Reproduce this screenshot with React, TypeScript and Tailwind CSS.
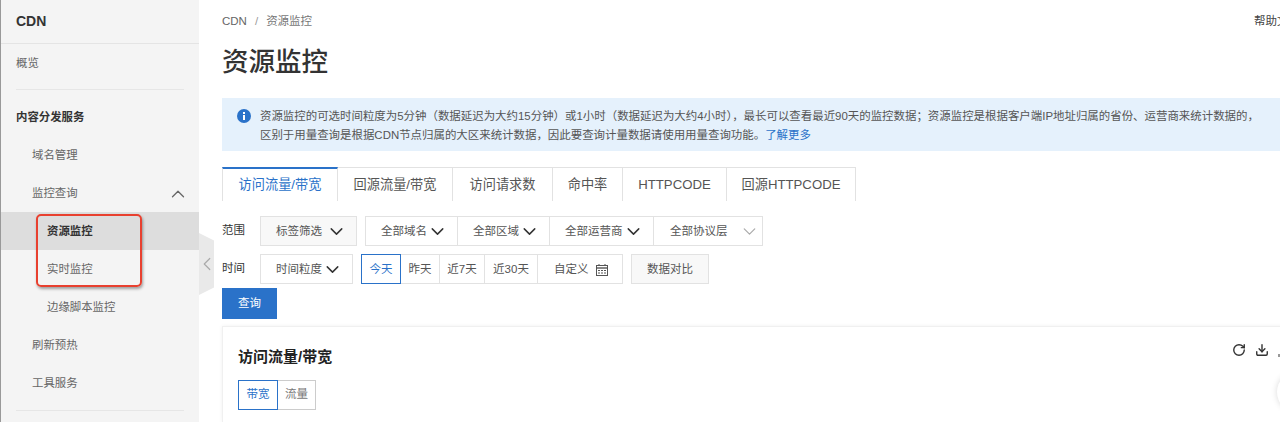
import { ChevronDown, ChevronLeft, ChevronUp, Download, RotateCw } from "lucide-react";

const font = "font-['Liberation_Sans','Noto_Sans_CJK_SC',sans-serif]";

const tabs = ["回源流量/带宽", "访问请求数", "命中率", "HTTPCODE", "回源HTTPCODE"];
const tabWidths = ["w-[115px]", "w-[100px]", "w-[70px]", "w-[104px]", "w-[129px]"];

const Sidebar = () => (
  <aside className="relative w-[199px] shrink-0 bg-[#f4f4f4] border-l border-[#999] text-[11.4px] text-[#666]">
    <div className="h-[44px] flex items-center pl-[15px] border-b border-[#e4e4e4] text-[14px] font-bold text-[#333]">CDN</div>
    <div className="h-[38px] flex items-center pl-[15px] pt-[2px]">概览</div>
    <div className="ml-[15px] mr-[15px] mt-[7px] border-t border-[#e6e6e6]" />
    <div className="h-[38px] mt-[8px] flex items-center pl-[15px] pt-[2px] font-bold text-[#333]">内容分发服务</div>
    <div className="h-[38px] flex items-center pl-[31px] pt-[2px]">域名管理</div>
    <div className="h-[38px] flex items-center justify-between pl-[31px] pr-[10px] pt-[2px]">
      监控查询
      <ChevronUp className="w-[22px] h-[22px] text-[#666]" strokeWidth={1.4} />
    </div>
    <div className="h-[38px] flex items-center pl-[46px] pt-[2px] bg-[#dddddd] font-bold text-[#333]">资源监控</div>
    <div className="h-[38px] flex items-center pl-[46px] pt-[2px]">实时监控</div>
    <div className="h-[38px] flex items-center pl-[46px] pt-[2px]">边缘脚本监控</div>
    <div className="h-[38px] flex items-center pl-[31px] pt-[2px]">刷新预热</div>
    <div className="h-[38px] flex items-center pl-[31px] pt-[2px]">工具服务</div>
    <div className="ml-[15px] mr-[15px] mt-[8px] border-t border-[#e6e6e6]" />

    {/* red annotation round the two menu items */}
    <div className="absolute left-[35px] top-[214px] w-[106px] h-[73px] rounded-[5px] border-[2px] border-[#e8402f] shadow-[1px_2px_3px_rgba(0,0,0,0.35)]" />

    {/* collapse handle */}
    <div className="absolute left-[198px] top-[233px] w-[15px] h-[62px] bg-[#e9e9e9] [clip-path:polygon(0_0,100%_12%,100%_88%,0_100%)] flex items-center justify-center">
      <ChevronLeft className="w-[22px] h-[22px] shrink-0 text-[#aaa]" strokeWidth={1.3} />
    </div>
  </aside>
);

const Select = ({ label, className }: { label: string; className: string }) => (
  <div className={`flex items-center justify-start pl-[15px] text-[11.5px] pt-px text-[#555] ${className}`}>
    {label}
    <ChevronDown className="w-[21px] h-[21px] -mt-px text-[#333]" strokeWidth={1.7} />
  </div>
);

const Seg = ({ label, className }: { label: string; className: string }) => (
  <div className={`h-[30px] flex items-center justify-center border border-[#e2e2e2] -ml-px text-[11.5px] pt-px text-[#555] ${className}`}>{label}</div>
);

const CalendarIcon = () => (
  <svg viewBox="0 0 12 12" className="w-[12px] h-[12px] text-[#555]" fill="none" stroke="currentColor">
    <path d="M3 0v2M9 0v2" strokeWidth="1" />
    <rect x="0.5" y="1.5" width="11" height="10" strokeWidth="1" />
    <path d="M0 4h12" strokeWidth="1.4" />
    <path d="M2 6.5h2M5 6.5h2M8 6.5h2M2 9h2M5 9h2M8 9h2" strokeWidth="1" />
  </svg>
);

const InfoIcon = () => (
  <svg viewBox="0 0 14 14" className="w-[14px] h-[14px] mt-[2px] shrink-0">
    <circle cx="7" cy="7" r="7" fill="#2a72c9" />
    <rect x="6" y="3" width="2" height="2" fill="#fff" />
    <rect x="6" y="6" width="2" height="5" fill="#fff" />
  </svg>
);

export default function App() {
  return (
    <div className={`relative flex w-[1280px] h-[422px] overflow-hidden bg-white ${font}`}>
      <Sidebar />
      <main className="flex-1 min-w-0 pl-[23px] overflow-hidden">
        <div className="h-[42px] pt-[2px] flex items-center justify-between text-[11.5px] text-[#666]">
          <div className="flex items-center gap-[8px]">
            <span>CDN</span>
            <span className="text-[#999]">/</span>
            <span className="text-[#777]">资源监控</span>
          </div>
          <span className="text-[#444] w-[26px] whitespace-nowrap">帮助文档</span>
        </div>

        <h1 className="h-[42px] flex items-center text-[26.5px] font-medium text-[#333]">资源监控</h1>

        <div className="mt-[14px] h-[53px] w-[1070px] bg-[#e5f1fc] flex pl-[15px] pt-[9px] text-[11.45px] leading-[19px] text-[#555]">
          <InfoIcon />
          <p className="ml-[9px] whitespace-nowrap">
            资源监控的可选时间粒度为5分钟（数据延迟为大约15分钟）或1小时（数据延迟为大约4小时），最长可以查看最近90天的监控数据；资源监控是根据客户端IP地址归属的省份、运营商来统计数据的，
            <br />
            区别于用量查询是根据CDN节点归属的大区来统计数据，因此要查询计量数据请使用用量查询功能。<span className="text-[#2a72c9]">了解更多</span>
          </p>
        </div>

        <div className="mt-[16px] flex h-[34px] text-[13.2px] text-[#555]">
          <div className="w-[116px] flex items-center justify-center border-t-2 border-x border-t-[#2a72c9] border-x-[#e2e2e2] text-[#2a72c9]">访问流量/带宽</div>
          {tabs.map((tab, i) => (
            <div key={tab} className={`flex items-center justify-center border-t border-r border-[#e2e2e2] ${tabWidths[i]}`}>{tab}</div>
          ))}
        </div>

        <div className="mt-[15px] flex items-center">
          <span className="w-[38px] text-[11.5px] text-[#333]">范围</span>
          <Select label="标签筛选" className="w-[97px] h-[30px] gap-[4px] border border-[#e2e2e2] bg-[#f8f8f8]" />
          <div className="ml-[8px] flex border border-[#e2e2e2]">
            <Select label="全部域名" className="w-[92px] h-[28px] border-r border-[#e2e2e2]" />
            <Select label="全部区域" className="w-[92px] h-[28px] border-r border-[#e2e2e2]" />
            <Select label="全部运营商" className="w-[104px] h-[28px] border-r border-[#e2e2e2]" />
            <div className="w-[108px] h-[28px] flex items-center pl-[16px] pt-px gap-[11px] text-[11.5px] text-[#555]">
              全部协议层
              <ChevronDown className="w-[21px] h-[21px] -mt-px text-[#aaa]" strokeWidth={1.4} />
            </div>
          </div>
        </div>

        <div className="mt-[8px] flex items-center">
          <span className="w-[38px] text-[11.5px] text-[#333]">时间</span>
          <Select label="时间粒度" className="w-[93px] h-[30px] border border-[#e2e2e2]" />
          <div className="ml-[8px] flex">
            <div className="w-[40px] h-[30px] flex items-center justify-center border border-[#2a72c9] text-[11.5px] pt-px text-[#2a72c9] z-10">今天</div>
            <Seg label="昨天" className="w-[40px]" />
            <Seg label="近7天" className="w-[46px]" />
            <Seg label="近30天" className="w-[54px]" />
            <div className="w-[86px] h-[30px] -ml-px flex items-center pl-[16px] pt-px gap-[7px] border border-[#e2e2e2] text-[11.5px] text-[#555]">
              自定义
              <CalendarIcon />
            </div>
          </div>
          <div className="ml-[8px] w-[78px] h-[30px] flex items-center justify-center border border-[#e2e2e2] bg-[#f8f8f8] text-[11.5px] pt-px text-[#555]">数据对比</div>
        </div>

        <button className="mt-[4px] block w-[55px] h-[31px] bg-[#2a72c9] text-white text-[11.5px]">查询</button>

        <div className="mt-[7px] h-[96px] w-[1070px] border-t border-l border-[#f0f0f0] shadow-[0_0_4px_rgba(0,0,0,0.06)] pl-[15px]">
          <div className="h-[53px] pt-[8px] flex items-center justify-between">
            <h2 className="text-[15px] font-bold text-[#222]">访问流量/带宽</h2>
            <div className="flex gap-[9px] mb-[16px] mr-[10px] w-[50px]">
              <RotateCw className="w-[14px] h-[14px] text-[#333] shrink-0" strokeWidth={2.4} />
              <Download className="w-[14px] h-[14px] text-[#333] shrink-0" strokeWidth={2.4} />
              <span className="w-[3px] h-[3px] bg-[#999] self-end shrink-0" />
            </div>
          </div>
          <div className="flex text-[11.5px]">
            <div className="w-[40px] h-[30px] flex items-center justify-center border border-[#2a72c9] text-[#2a72c9] z-10">带宽</div>
            <div className="w-[39px] h-[30px] -ml-px flex items-center justify-center border border-[#ccc] text-[#777]">流量</div>
          </div>
        </div>
      </main>

      {/* floating help button, mostly off the page */}
      <div className="absolute left-[1277px] top-[372px] w-[40px] h-[40px] rounded-full bg-white shadow-[0_0_6px_rgba(0,0,0,0.15)]" />
    </div>
  );
}
